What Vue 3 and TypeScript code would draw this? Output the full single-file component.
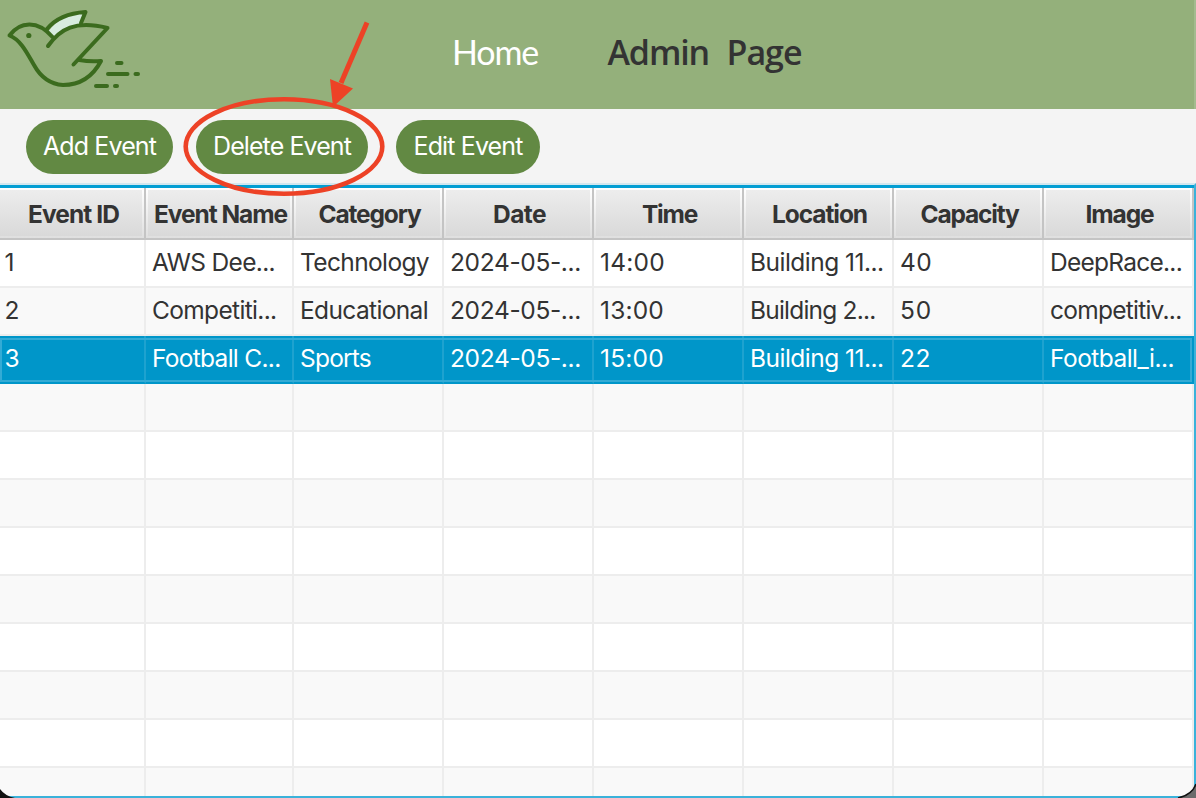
<script setup lang="ts">
import { nextTick, type Directive } from 'vue'

interface Label { text: string; width: number }
interface Row { cells: Label[]; selected: boolean }

// Tracks each label so that it occupies its measured width.
const fit = async (el: HTMLElement, width: number) => {
  await nextTick()
  el.style.letterSpacing = '0px'
  const natural = el.getBoundingClientRect().width
  const count = (el.textContent ?? '').length
  el.style.letterSpacing = `${(width - natural) / count}px`
}
const vFit: Directive<HTMLElement, number> = {
  mounted: (el, binding) => {
    fit(el, binding.value)
    document.fonts.ready.then(() => fit(el, binding.value))
  },
}

const t = (text: string, width: number): Label => ({ text, width })

const actions: Label[] = [t('Add Event', 113), t('Delete Event', 138), t('Edit Event', 109)]
const columns: Label[] = [
  t('Event ID', 91), t('Event Name', 133), t('Category', 102), t('Date', 53),
  t('Time', 55), t('Location', 95), t('Capacity', 98), t('Image', 68),
]
const rows: Row[] = [
  { selected: false, cells: [t('1', 13), t('AWS Dee...', 123), t('Technology', 129), t('2024-05-...', 131), t('14:00', 65), t('Building 11...', 133.5), t('40', 32), t('DeepRace...', 132)] },
  { selected: false, cells: [t('2', 15), t('Competiti...', 124.5), t('Educational', 128), t('2024-05-...', 131), t('13:00', 64), t('Building 2...', 125.5), t('50', 32), t('competitiv...', 131.5)] },
  { selected: true, cells: [t('3', 15), t('Football C...', 128.5), t('Sports', 71), t('2024-05-...', 131), t('15:00', 64), t('Building 11...', 133.5), t('22', 31), t('Football_i...', 124)] },
]
const emptyRows = 9
</script>

<template>
  <div class="window">
    <header class="topbar">
      <svg class="bird" width="144" height="100" viewBox="0 0 144 100" fill="none" stroke="#3b6b1e" stroke-width="4" stroke-linecap="round" stroke-linejoin="round">
        <path d="M48 32C57 19 70 13 85.500 12L81 24C70 25 60 30 53 38Z" fill="#d8ecdf" stroke="none" />
        <path d="M48 46C60 29 75 20 107.500 28L73.500 64.500M79.500 60Q90 62 101 61C92 78 78 85 63 85C49 84 40 76 34 65C27 53 21 40 9.500 35.500C20 21 38 20 52.500 37" />
        <path d="M47 29C56 18 70 13 85.500 12L81 23" />
        <path d="M117 63H121.500M108 74H127.500M135.500 74H138M96 86H107M115 86H117" />
        <circle cx="28.800" cy="35.500" r="2.600" fill="#3b6b1e" stroke="none" />
      </svg>
      <nav class="nav">
        <a class="home"><span v-fit="86">Home</span></a>
        <a class="admin"><span v-fit="101.500">Admin</span><span v-fit="75">Page</span></a>
      </nav>
    </header>

    <div class="toolbar">
      <button v-for="a in actions" :key="a.text" class="action"><span v-fit="a.width">{{ a.text }}</span></button>
    </div>

    <main class="table">
      <div class="row head">
        <div v-for="c in columns" :key="c.text" class="th"><span v-fit="c.width">{{ c.text }}</span></div>
      </div>
      <div v-for="(r, i) in rows" :key="i" class="row body" :class="{ selected: r.selected }">
        <div v-for="(c, j) in r.cells" :key="j" class="td"><span v-fit="c.width">{{ c.text }}</span></div>
      </div>
      <div v-for="n in emptyRows" :key="'e' + n" class="row body">
        <div v-for="c in columns" :key="c.text" class="td"></div>
      </div>
    </main>

    <svg class="annotation" width="1196" height="798" viewBox="0 0 1196 798">
      <ellipse cx="284" cy="146.500" rx="98.300" ry="47.300" fill="none" stroke="#ed4226" stroke-width="4.600" />
      <path d="M367 22.500L341 83" stroke="#ed4226" stroke-width="5" />
      <path d="M330 79L353 88.500L333 107Z" fill="#ed4226" />
    </svg>
    <svg class="corners" width="1196" height="20" viewBox="0 0 1196 20">
      <path d="M0 11Q5 18 15 20H0Z" fill="#111" />
      <path d="M1196 6Q1192 17 1178 20H1196Z" fill="#6b6b6b" />
      <path d="M1196 6Q1192 17 1178 20" fill="none" stroke="#111" stroke-width="1.500" />
    </svg>
  </div>
</template>

<style>
body { margin: 0; overflow: hidden; }
</style>

<style scoped>
.window {
  position: relative;
  display: flex;
  flex-direction: column;
  width: 1196px;
  height: 798px;
  overflow: hidden;
  background: #f4f4f4;
  color: #333;
  font-family: Inter, "Liberation Sans", sans-serif;
}
.window * { box-sizing: border-box; }
span { display: inline-block; white-space: pre; }
.topbar {
  display: flex;
  height: 109px;
  flex: none;
  background: #94b07b;
  border-right: 2px solid #a4bb8f;
}
.bird { flex: none; }
.nav {
  display: flex;
  margin-left: 308px;
  padding-top: 28px;
  font: 34px/48px "Open Sans", "Noto Sans", sans-serif;
}
.home { width: 155.500px; color: #fff; font-family: Lato, sans-serif; font-weight: 400; }
.admin { display: flex; gap: 17.500px; font-weight: 600; }
.toolbar {
  display: flex;
  height: 74px;
  flex: none;
  padding: 11px 26px 0;
}
.action {
  height: 54px;
  width: 147px;
  padding: 0 0 2px;
  border: 0;
  border-radius: 27px;
  background: #628943;
  color: #fff;
  font: 400 25px/52px Inter, "Liberation Sans", sans-serif;
}
.action:nth-child(2) { width: 172px; margin: 0 28px 0 23px; }
.action:nth-child(3) { width: 144px; }
.table {
  flex: 1;
  min-height: 0;
  overflow: hidden;
  border-top: 2px solid #d2e7ef;
  border-right: 2px solid #3bb2da;
  border-bottom: 2px solid #3bb2da;
}
.row {
  display: grid;
  grid-template-columns: 146px 148px repeat(6, 150px);
}
.head {
  height: 55px;
  border-top: 3px solid #039ed3;
  border-bottom: 2px solid #c4c4c4;
  font-weight: 700;
  font-size: 24.500px;
  line-height: 48px;
}
.th {
  overflow: hidden;
  padding-left: 3px;
  text-align: center;
  border-right: 2px solid #c4c4c4;
  background: linear-gradient(#ededed, #d9d9d9) 2px 2px / calc(100% - 4px) calc(100% - 4px) no-repeat, linear-gradient(#fff, #dfdfdf);
}
.th:first-child { background-position: 0 2px, 0 0; background-size: calc(100% - 2px) calc(100% - 4px), auto; }
.th span { margin: 2px -10px 0; }
.body {
  position: relative;
  height: 48px;
  background: #fff;
  font-size: 24.500px;
  line-height: 44px;
}
.body:nth-child(odd) { background: #f9f9f9; }
.td {
  padding-left: 6px;
  border-right: 2px solid #ededed;
  border-bottom: 2px solid #ededed;
}
.td:first-child { padding-left: 4.500px; }
.body.selected { background: #0096c9; color: #fff; }
.selected .td { border-color: #1ea2cf; border-bottom-color: transparent; }
.selected .td:last-child { border-right-color: transparent; }
.selected::after {
  content: "";
  position: absolute;
  inset: 2px 2px 2px 0;
  border: 2px solid #34abd5;
}
.annotation { position: absolute; inset: 0; pointer-events: none; }
.corners { position: absolute; left: 0; bottom: 0; }
</style>
